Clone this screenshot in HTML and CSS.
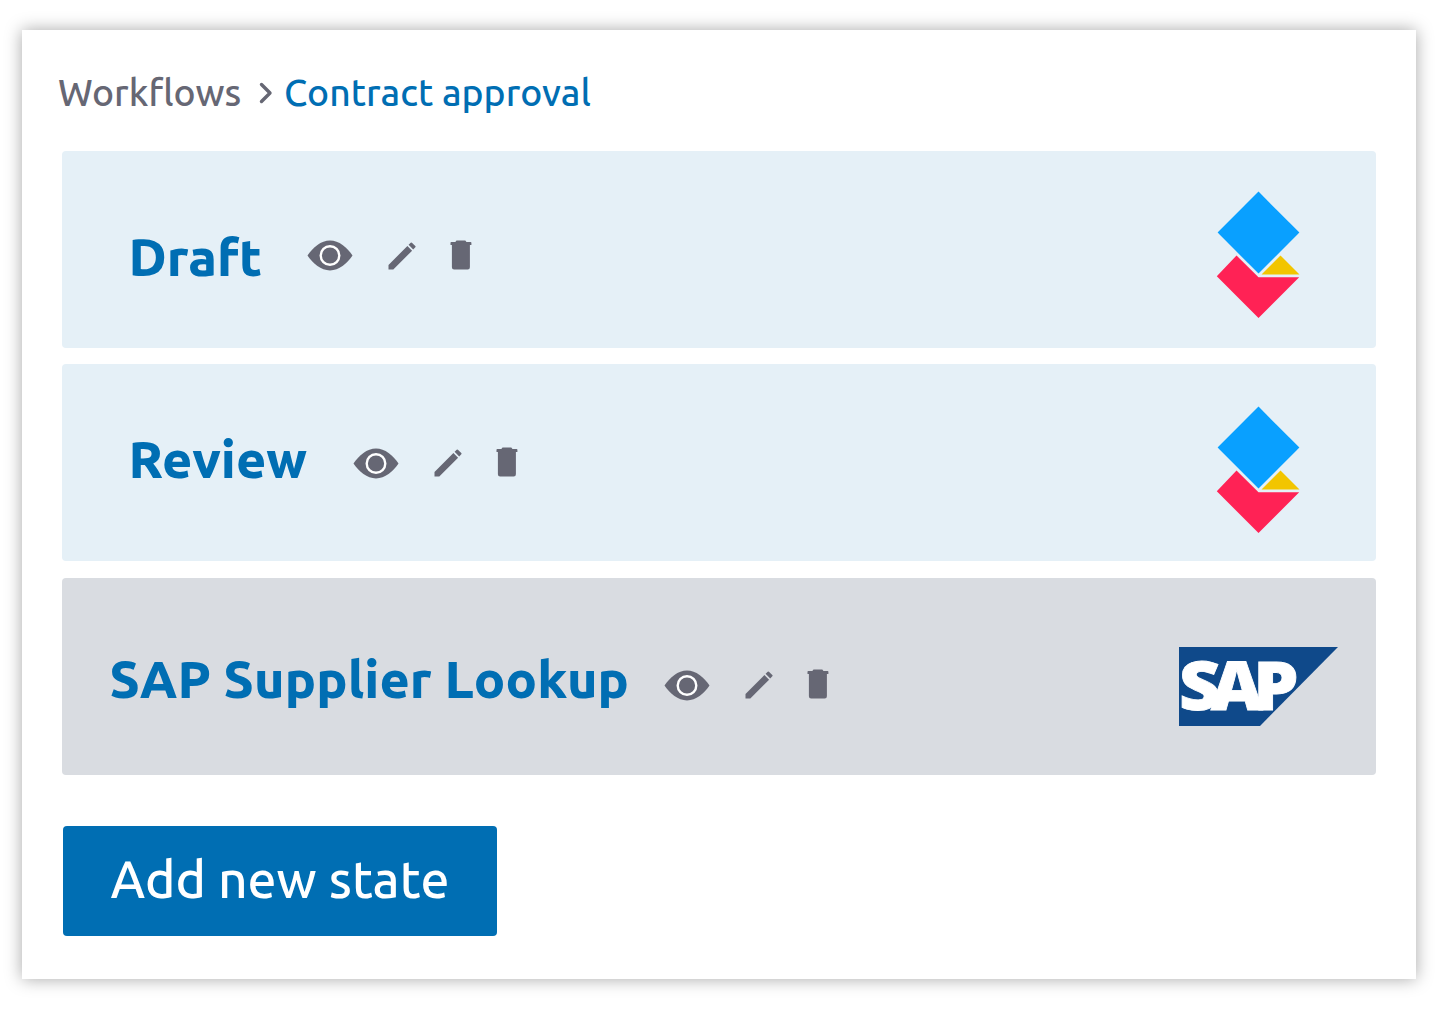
FILE: index.html
```html
<!DOCTYPE html>
<html lang="en">
<head>
<meta charset="utf-8">
<title>Contract approval</title>
<link rel="stylesheet" href="styles.css">
</head>
<body>
<svg class="defs" width="0" height="0" aria-hidden="true">
  <symbol id="eye" viewBox="0 0 46 31">
    <path d="M.5 15.500C6 7.500 14 .6 23 .6s17 6.900 22.500 14.900C40 23.500 32 30.400 23 30.400S6 23.500.5 15.500z" fill="#666774"/>
    <circle cx="23" cy="15.500" r="9.300" fill="#666774" stroke="#fff" stroke-width="2.400"/>
  </symbol>
  <symbol id="pencil" viewBox="0 0 28 28">
    <path d="M.5 27.500v-4.600L19.400 4l4.700 4.700L5.300 27.500zM20.600 2.800 22.700.7q.6-.5 1.200 0l3.400 3.400q.6.600 0 1.200l-2.100 2.200z" fill="#666774"/>
  </symbol>
  <symbol id="trash" viewBox="0 0 22 30">
    <path d="M6.500.5h8.800l1.200 1.400h4.100q.8 0 .8.800v2.200H.5V2.700q0-.8.800-.8h4zM1.900 4.500h18v22.700q0 2.200-2.200 2.200H4.100q-2.200 0-2.200-2.200z" fill="#666774"/>
  </symbol>
  <symbol id="diamonds" viewBox="0 0 84 128">
    <path d="M42.500 .6 83.400 41.600 42.500 82.600 1.600 41.600z" fill="#09a0ff"/>
    <path d="M20.500 64.500 42.500 86.300h40.700L42.500 127 .8 85.300z" fill="#ff2255"/>
    <path d="M64.500 64.500 83.500 83.400H45.500z" fill="#f2c500"/>
  </symbol>
</svg>
<main class="card">
  <nav class="crumbs">
    <a class="crumb">Workflows</a>
    <svg class="chevron" width="14" height="22" viewBox="0 0 14 22"><path d="M2.500 2.500 11 11l-8.500 8.500" fill="none" stroke="#666774" stroke-width="3.400" stroke-linecap="round" stroke-linejoin="round"/></svg>
    <a class="crumb current">Contract approval</a>
  </nav>
  <section class="states">
    <article class="state draft">
      <h2 class="name">Draft</h2>
      <div class="actions">
        <svg class="eye"><use href="#eye"/></svg>
        <svg class="pencil"><use href="#pencil"/></svg>
        <svg class="trash"><use href="#trash"/></svg>
      </div>
      <svg class="logo"><use href="#diamonds"/></svg>
    </article>
    <article class="state review">
      <h2 class="name">Review</h2>
      <div class="actions">
        <svg class="eye"><use href="#eye"/></svg>
        <svg class="pencil"><use href="#pencil"/></svg>
        <svg class="trash"><use href="#trash"/></svg>
      </div>
      <svg class="logo"><use href="#diamonds"/></svg>
    </article>
    <article class="state supplier">
      <h2 class="name">SAP Supplier Lookup</h2>
      <div class="actions">
        <svg class="eye"><use href="#eye"/></svg>
        <svg class="pencil"><use href="#pencil"/></svg>
        <svg class="trash"><use href="#trash"/></svg>
      </div>
      <svg class="logo" viewBox="0 0 159 79">
        <path d="M0 0h159L81 79H0z" fill="#0f498a"/>
        <text class="sap" x="0" y="63" transform="scale(1.070 1)">SAP</text>
      </svg>
    </article>
  </section>
  <button class="add" type="button">Add new state</button>
</main>
</body>
</html>
```
FILE: styles.css
```css
* { box-sizing: border-box; }

body {
  margin: 0;
  padding: 29.500px 20.500px 39px 22px;
  height: 1018px;
  background: #fff;
  font-family: Ubuntu, "Noto Sans", sans-serif;
  overflow: hidden;
}

.defs { display: none; }

.card {
  height: 949.500px;
  padding: 33px 39.500px 0 40px;
  background: #fff;
  box-shadow: 0 0 16px rgba(0, 0, 0, .35);
}

.crumbs {
  display: flex;
  align-items: center;
  height: 60px;
  margin-left: -4px;
  font-size: 37.300px;
  font-weight: 500;
  line-height: 59px;
  color: #666774;
  white-space: nowrap;
}

.crumb { width: 201px; }
.crumb.current { width: auto; color: #006eb3; }
.chevron { flex: none; margin-right: 11px; }

.states {
  display: grid;
  gap: 16.500px;
  margin-top: 28px;
}

.state {
  display: flex;
  align-items: flex-start;
  height: 197px;
  padding-left: 66.500px;
  border-radius: 4px;
  background: #e5f0f7;
}

.name {
  flex: none;
  margin: 0;
  font-size: 52px;
  line-height: 60px;
  font-weight: 800;
  color: #006eb3;
  white-space: nowrap;
}

.actions {
  display: flex;
  align-items: center;
  height: 32px;
}

.eye { width: 46px; height: 31px; }
.pencil { width: 28px; height: 28px; margin-left: 35px; }
.trash { width: 22px; height: 30px; margin: 0 0 2px 34px; }

.logo {
  flex: none;
  width: 84px;
  height: 128px;
  margin-left: auto;
  margin-right: 76px;
}

.draft .name { width: 178.500px; margin-top: 76.500px; }
.draft .actions { margin-top: 89px; }
.draft .logo { margin-top: 40.500px; }

.review .name { width: 224.500px; margin-top: 65px; }
.review .actions { margin-top: 83px; }
.review .logo { margin-top: 42px; }

.supplier { padding-left: 47.500px; background: #d9dce1; }
.supplier .name { width: 554.500px; margin-top: 71px; letter-spacing: .1px; }
.supplier .actions { margin-top: 91.500px; }
.supplier .logo {
  width: 159px;
  height: 79px;
  margin-top: 69.500px;
  margin-right: 38px;
}

.sap {
  font-family: "Open Sans", "Noto Sans", sans-serif;
  font-size: 67px;
  font-weight: 800;
  letter-spacing: -9px;
  fill: #fff;
  stroke: #fff;
  stroke-width: .8px;
}

.add {
  display: block;
  width: 434px;
  height: 110px;
  margin: 51px 0 0 1px;
  padding: 0 0 4px;
  border: 0;
  border-radius: 4px;
  background: #006eb3;
  color: #fff;
  font: 500 51.500px/60px Ubuntu, "Noto Sans", sans-serif;
  white-space: nowrap;
}
```
